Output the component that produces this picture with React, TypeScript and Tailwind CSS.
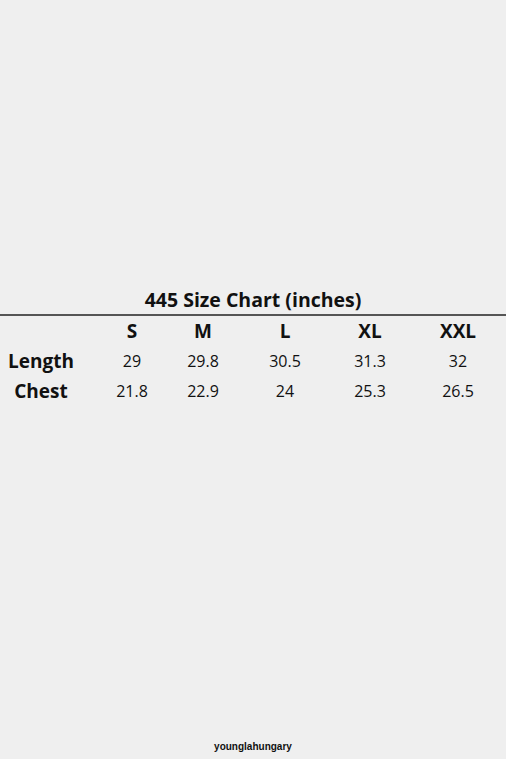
const sizes = ["S", "M", "L", "XL", "XXL"];

const rows = [
  { label: "Length", values: ["29", "29.8", "30.5", "31.3", "32"] },
  { label: "Chest", values: ["21.8", "22.9", "24", "25.3", "26.5"] },
];

// per-column left offsets so centres land where the chart has them
const colMargins = ["ml-[21px]", "ml-[11px]", "ml-[22px]", "ml-[25px]", "ml-[28px]"];

function Cell({ children, margin, bold }: { children: string; margin: string; bold?: boolean }) {
  return (
    <div
      className={`${margin} flex w-[60px] justify-center whitespace-nowrap ${
        bold ? "text-[19px] font-bold" : "text-[16px]"
      }`}
    >
      {children}
    </div>
  );
}

export default function App() {
  return (
    <div className="flex min-h-[759px] flex-col bg-[#efefef] text-[#111] [font-family:'Open_Sans',sans-serif]">
      <div className="flex h-[28px] mt-[286px] items-center justify-center text-[19.5px] font-bold">
        445 Size Chart (inches)
      </div>
      <div className="h-[2px] bg-[#555]" />

      <div className="flex h-[30px] items-center pl-[1px]">
        <div className="w-[80px]" />
        {sizes.map((s, i) => (
          <Cell key={s} margin={colMargins[i]} bold>
            {s}
          </Cell>
        ))}
      </div>

      {rows.map((row) => (
        <div key={row.label} className="flex h-[30px] items-center pl-[1px]">
          <div className="flex w-[80px] justify-center text-[19px] font-bold">{row.label}</div>
          {row.values.map((v, i) => (
            <Cell key={i} margin={colMargins[i]}>
              {v}
            </Cell>
          ))}
        </div>
      ))}

      <div className="mt-auto pb-[5px] text-center text-[10px] leading-[14px] font-bold [font-family:'Liberation_Sans',sans-serif]">
        younglahungary
      </div>
    </div>
  );
}
